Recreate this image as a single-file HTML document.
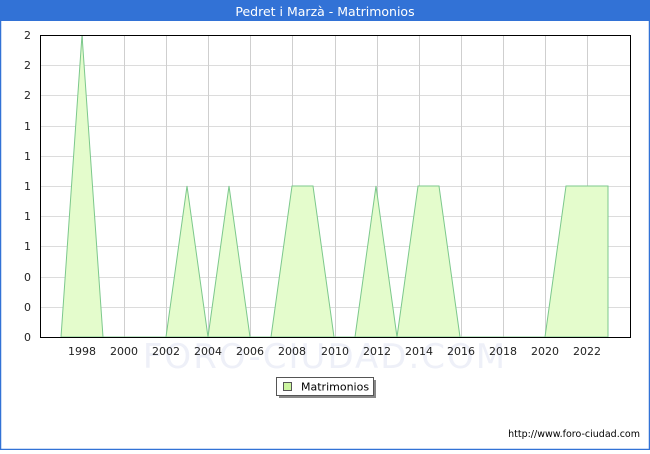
<!DOCTYPE html>
<html><head><style>
body{margin:0;width:650px;height:450px;overflow:hidden;background:#fff;font-family:"DejaVu Sans","Liberation Sans",sans-serif}
</style></head><body>
<svg width="650" height="450" xmlns="http://www.w3.org/2000/svg" font-family="DejaVu Sans, Liberation Sans, sans-serif">
<rect x="0.5" y="0.5" width="649" height="449" fill="#fff" stroke="#3272d6" stroke-width="1.5"/>
<rect x="0" y="0" width="650" height="21" fill="#3272d6"/>
<text x="325" y="16" fill="#fff" font-size="12.5" text-anchor="middle">Pedret i Marzà - Matrimonios</text>
<g stroke="#dcdcdc" stroke-width="1">
<line x1="40" y1="65.5" x2="630" y2="65.5"/><line x1="40" y1="95.5" x2="630" y2="95.5"/><line x1="40" y1="126.5" x2="630" y2="126.5"/><line x1="40" y1="156.5" x2="630" y2="156.5"/><line x1="40" y1="186.5" x2="630" y2="186.5"/><line x1="40" y1="216.5" x2="630" y2="216.5"/><line x1="40" y1="246.5" x2="630" y2="246.5"/><line x1="40" y1="277.5" x2="630" y2="277.5"/><line x1="40" y1="307.5" x2="630" y2="307.5"/>
</g>
<g stroke="#cfcfcf" stroke-width="1">
<line x1="82.5" y1="35" x2="82.5" y2="337"/><line x1="124.5" y1="35" x2="124.5" y2="337"/><line x1="166.5" y1="35" x2="166.5" y2="337"/><line x1="208.5" y1="35" x2="208.5" y2="337"/><line x1="250.5" y1="35" x2="250.5" y2="337"/><line x1="292.5" y1="35" x2="292.5" y2="337"/><line x1="335.5" y1="35" x2="335.5" y2="337"/><line x1="377.5" y1="35" x2="377.5" y2="337"/><line x1="419.5" y1="35" x2="419.5" y2="337"/><line x1="461.5" y1="35" x2="461.5" y2="337"/><line x1="503.5" y1="35" x2="503.5" y2="337"/><line x1="545.5" y1="35" x2="545.5" y2="337"/><line x1="587.5" y1="35" x2="587.5" y2="337"/>
</g>
<text x="325" y="368" font-size="34" fill="#eef0f8" text-anchor="middle" letter-spacing="2">FORO-CIUDAD.COM</text>
<polygon fill="#e4fccc" stroke="#7cc88c" stroke-width="1" points="61,337 82,35 103,337 61,337"/>
<polygon fill="#e4fccc" stroke="#7cc88c" stroke-width="1" points="166,337 187,186 208,337 229,186 250,337"/>
<polygon fill="#e4fccc" stroke="#7cc88c" stroke-width="1" points="271,337 292,186 313,186 334,337"/>
<polygon fill="#e4fccc" stroke="#7cc88c" stroke-width="1" points="355,337 376,186 397,337 418,186 439,186 460,337"/>
<polygon fill="#e4fccc" stroke="#7cc88c" stroke-width="1" points="545,337 566,186 587,186 608,186 608,337"/>
<line x1="61" y1="337" x2="608" y2="337" stroke="#7cc88c"/>
<rect x="40.5" y="35.5" width="590" height="302" fill="none" stroke="#000" stroke-width="1"/>
<g font-size="11" fill="#222" text-anchor="end">
<text x="31" y="39">2</text><text x="31" y="69">2</text><text x="31" y="99">2</text><text x="31" y="130">1</text><text x="31" y="160">1</text><text x="31" y="190">1</text><text x="31" y="220">1</text><text x="31" y="250">1</text><text x="31" y="281">0</text><text x="31" y="311">0</text><text x="31" y="341">0</text>
</g>
<g font-size="11" fill="#222" text-anchor="middle">
<text x="82" y="355">1998</text><text x="124" y="355">2000</text><text x="166" y="355">2002</text><text x="208" y="355">2004</text><text x="250" y="355">2006</text><text x="292" y="355">2008</text><text x="335" y="355">2010</text><text x="377" y="355">2012</text><text x="419" y="355">2014</text><text x="461" y="355">2016</text><text x="503" y="355">2018</text><text x="545" y="355">2020</text><text x="587" y="355">2022</text>
</g>
<rect x="279" y="380" width="97" height="18" fill="#888"/>
<rect x="276.5" y="377.5" width="97" height="18" fill="#fff" stroke="#555"/>
<rect x="283.5" y="382.5" width="8" height="8" fill="#ccf5a0" stroke="#555"/>
<text x="301" y="390.5" font-size="11" fill="#000">Matrimonios</text>
<text x="640" y="437" font-size="9.5" fill="#000" text-anchor="end">http://www.foro-ciudad.com</text>
</svg>
</body></html>
